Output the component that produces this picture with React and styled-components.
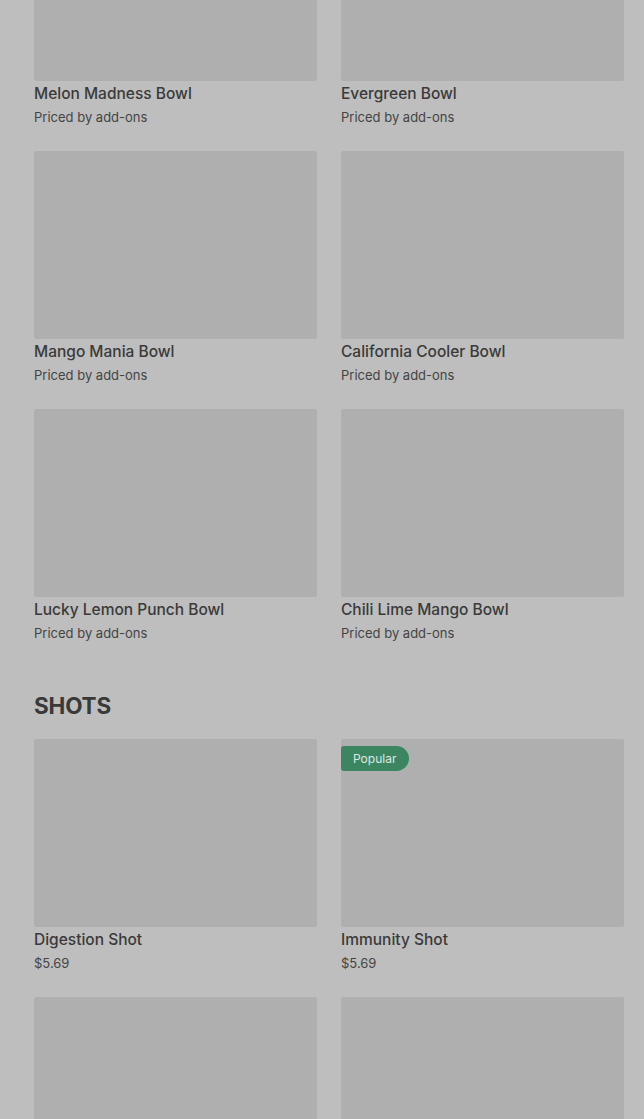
import React from "react";
import styled, { createGlobalStyle } from "styled-components";

const Global = createGlobalStyle`
  html, body { margin: 0; padding: 0; background: #bebebe; overflow: hidden; }
  body { font-family: Inter, "Liberation Sans", sans-serif; }
`;

const Page = styled.div`
  padding: 0 20px 0 34px;
  margin-top: -107px;
`;

const Grid = styled.div`
  display: grid;
  grid-template-columns: 283px 283px;
  column-gap: 24px;
  row-gap: 23px;
`;

const Card = styled.div`
  display: flex;
  flex-direction: column;
`;

const Thumb = styled.div`
  position: relative;
  height: 188px;
  background: #afafaf;
  border-radius: 2px;
`;

const Badge = styled.span`
  position: absolute;
  top: 7px;
  left: 0;
  height: 25px;
  padding: 0 13px 0 12px;
  display: flex;
  align-items: center;
  background: #3b8661;
  color: #dfe6e2;
  font-size: 12px;
  border-radius: 3px 13px 13px 3px;
`;

const Title = styled.div`
  margin-top: 3px;
  font-size: 15.5px;
  line-height: 20px;
  font-weight: 500;
  color: #3a3a3a;
`;

const Price = styled.div`
  margin-top: 2px;
  font-size: 13px;
  line-height: 22px;
  color: #444;
`;

const Heading = styled.h2`
  margin: 48px 0 19px;
  font-size: 22.5px;
  line-height: 28px;
  font-weight: 700;
  color: #393939;
  letter-spacing: -0.2px;
`;

const bowls = [
  "Melon Madness Bowl",
  "Evergreen Bowl",
  "Mango Mania Bowl",
  "California Cooler Bowl",
  "Lucky Lemon Punch Bowl",
  "Chili Lime Mango Bowl",
];

const shots = [
  { name: "Digestion Shot", price: "$5.69" },
  { name: "Immunity Shot", price: "$5.69", popular: true },
  { name: "", price: "" },
  { name: "", price: "" },
];

function Item({ name, price, popular }) {
  return (
    <Card>
      <Thumb>{popular && <Badge>Popular</Badge>}</Thumb>
      {name && <Title>{name}</Title>}
      {price && <Price>{price}</Price>}
    </Card>
  );
}

export default function App() {
  return (
    <>
      <Global />
      <Page>
        <Grid>
          {bowls.map((b) => (
            <Item key={b} name={b} price="Priced by add-ons" />
          ))}
        </Grid>
        <Heading>SHOTS</Heading>
        <Grid>
          {shots.map((s, i) => (
            <Item key={i} {...s} />
          ))}
        </Grid>
      </Page>
    </>
  );
}
